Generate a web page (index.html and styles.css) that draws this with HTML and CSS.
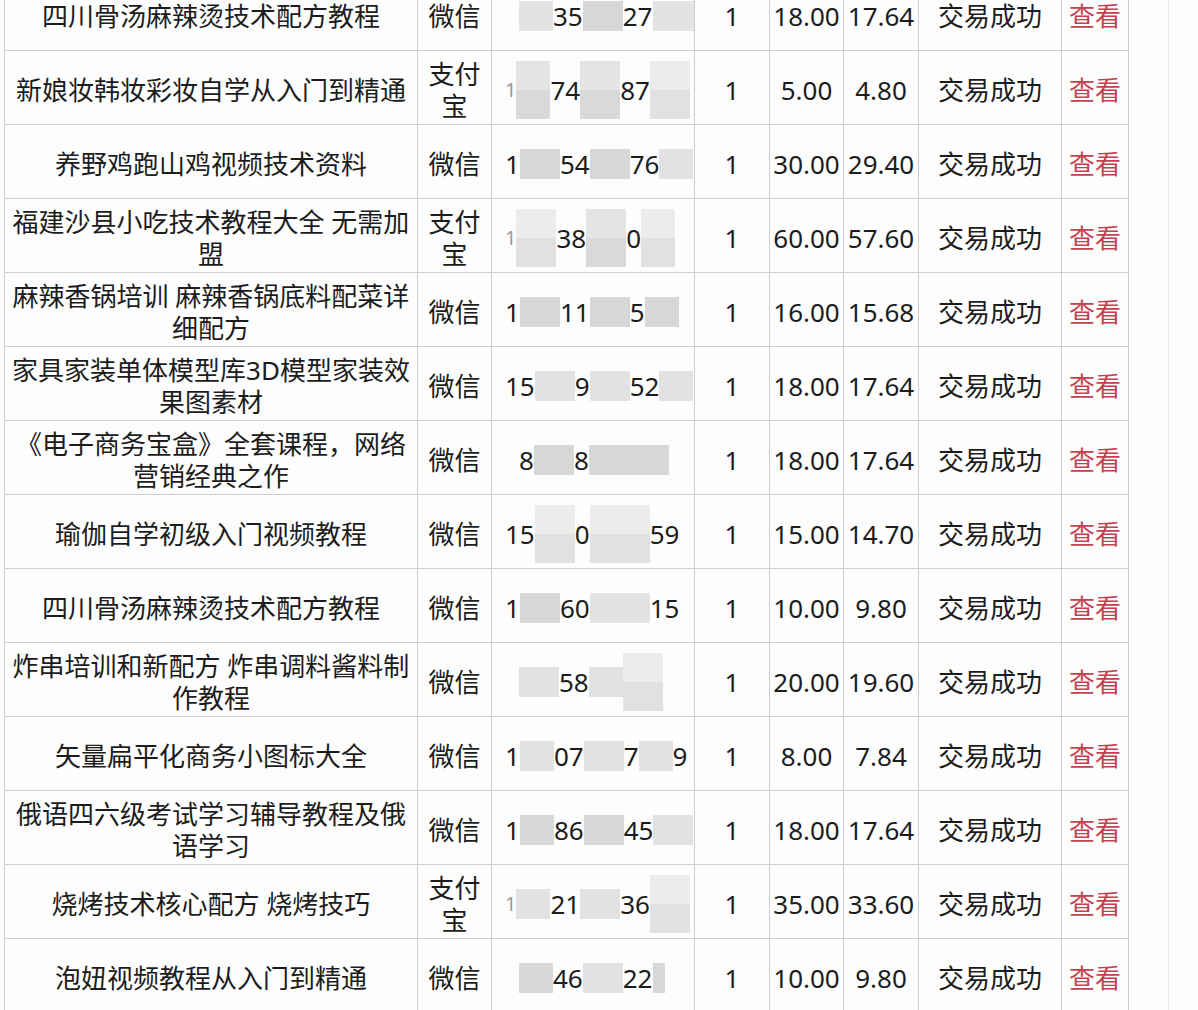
FILE: index.html
```html
<!DOCTYPE html>
<html lang="zh-CN">
<head>
<meta charset="utf-8">
<title>订单列表</title>
<link rel="stylesheet" href="styles.css">
</head>
<body>
<div class="page">
<table class="orders">
<colgroup>
<col class="c-name"><col class="c-pay"><col class="c-phone"><col class="c-qty"><col class="c-price"><col class="c-net"><col class="c-status"><col class="c-op">
</colgroup>
<tbody>
<tr><td class="name">四川骨汤麻辣烫技术配方教程</td><td>微信</td><td class="ph"><div class="phone"><span class="sp"></span><span class="g w2 light"></span><span class="d">35</span><span class="g w3"></span><span class="d">27</span><span class="g w4 light"></span></div></td><td>1</td><td class="num">18.00</td><td class="num">17.64</td><td>交易成功</td><td><a class="view">查看</a></td></tr>
<tr><td class="name">新娘妆韩妆彩妆自学从入门到精通</td><td>支付宝</td><td class="ph"><div class="phone"><span class="d faint">1</span><span class="g w2 t"></span><span class="d">74</span><span class="g w3 t"></span><span class="d">87</span><span class="g w3 t light"></span></div></td><td>1</td><td class="num">5.00</td><td class="num">4.80</td><td>交易成功</td><td><a class="view">查看</a></td></tr>
<tr><td class="name">养野鸡跑山鸡视频技术资料</td><td>微信</td><td class="ph"><div class="phone"><span class="d">1</span><span class="g w3"></span><span class="d">54</span><span class="g w3"></span><span class="d">76</span><span class="g w2 light"></span></div></td><td>1</td><td class="num">30.00</td><td class="num">29.40</td><td>交易成功</td><td><a class="view">查看</a></td></tr>
<tr><td class="name">福建沙县小吃技术教程大全 无需加盟</td><td>支付宝</td><td class="ph"><div class="phone"><span class="d faint">1</span><span class="g w3 t light"></span><span class="d">38</span><span class="g w3 t"></span><span class="d">0</span><span class="g w2 t light"></span></div></td><td>1</td><td class="num">60.00</td><td class="num">57.60</td><td>交易成功</td><td><a class="view">查看</a></td></tr>
<tr><td class="name">麻辣香锅培训 麻辣香锅底料配菜详细配方</td><td>微信</td><td class="ph"><div class="phone"><span class="d">1</span><span class="g w3"></span><span class="d">11</span><span class="g w3"></span><span class="d">5</span><span class="g w2"></span></div></td><td>1</td><td class="num">16.00</td><td class="num">15.68</td><td>交易成功</td><td><a class="view">查看</a></td></tr>
<tr><td class="name">家具家装单体模型库3D模型家装效果图素材</td><td>微信</td><td class="ph"><div class="phone"><span class="d">15</span><span class="g w3 light"></span><span class="d">9</span><span class="g w3 light"></span><span class="d">52</span><span class="g w2 light"></span></div></td><td>1</td><td class="num">18.00</td><td class="num">17.64</td><td>交易成功</td><td><a class="view">查看</a></td></tr>
<tr><td class="name">《电子商务宝盒》全套课程，网络营销经典之作</td><td>微信</td><td class="ph"><div class="phone"><span class="sp"></span><span class="d">8</span><span class="g w3"></span><span class="d">8</span><span class="g w5"></span></div></td><td>1</td><td class="num">18.00</td><td class="num">17.64</td><td>交易成功</td><td><a class="view">查看</a></td></tr>
<tr><td class="name">瑜伽自学初级入门视频教程</td><td>微信</td><td class="ph"><div class="phone"><span class="d">15</span><span class="g w3 t light"></span><span class="d">0</span><span class="g w4 t light"></span><span class="d">59</span></div></td><td>1</td><td class="num">15.00</td><td class="num">14.70</td><td>交易成功</td><td><a class="view">查看</a></td></tr>
<tr><td class="name">四川骨汤麻辣烫技术配方教程</td><td>微信</td><td class="ph"><div class="phone"><span class="d">1</span><span class="g w3"></span><span class="d">60</span><span class="g w4 light"></span><span class="d">15</span></div></td><td>1</td><td class="num">10.00</td><td class="num">9.80</td><td>交易成功</td><td><a class="view">查看</a></td></tr>
<tr><td class="name">炸串培训和新配方 炸串调料酱料制作教程</td><td>微信</td><td class="ph"><div class="phone"><span class="sp"></span><span class="g w3 light"></span><span class="d">58</span><span class="g w2 light"></span><span class="g w3 t light"></span></div></td><td>1</td><td class="num">20.00</td><td class="num">19.60</td><td>交易成功</td><td><a class="view">查看</a></td></tr>
<tr><td class="name">矢量扁平化商务小图标大全</td><td>微信</td><td class="ph"><div class="phone"><span class="d">1</span><span class="g w2 light"></span><span class="d">07</span><span class="g w3 light"></span><span class="d">7</span><span class="g w2 light"></span><span class="d">9</span></div></td><td>1</td><td class="num">8.00</td><td class="num">7.84</td><td>交易成功</td><td><a class="view">查看</a></td></tr>
<tr><td class="name">俄语四六级考试学习辅导教程及俄语学习</td><td>微信</td><td class="ph"><div class="phone"><span class="d">1</span><span class="g w2"></span><span class="d">86</span><span class="g w3"></span><span class="d">45</span><span class="g w3 light"></span></div></td><td>1</td><td class="num">18.00</td><td class="num">17.64</td><td>交易成功</td><td><a class="view">查看</a></td></tr>
<tr><td class="name">烧烤技术核心配方 烧烤技巧</td><td>支付宝</td><td class="ph"><div class="phone"><span class="d faint">1</span><span class="g w2 light"></span><span class="d">21</span><span class="g w3 light"></span><span class="d">36</span><span class="g w3 t light"></span></div></td><td>1</td><td class="num">35.00</td><td class="num">33.60</td><td>交易成功</td><td><a class="view">查看</a></td></tr>
<tr><td class="name">泡妞视频教程从入门到精通</td><td>微信</td><td class="ph"><div class="phone"><span class="sp"></span><span class="g w2"></span><span class="d">46</span><span class="g w3 light"></span><span class="d">22</span><span class="g w1"></span></div></td><td>1</td><td class="num">10.00</td><td class="num">9.80</td><td>交易成功</td><td><a class="view">查看</a></td></tr>
</tbody>
</table>
<div class="edge"></div>
</div>
</body>
</html>
```

FILE: styles.css
```css
html, body {
  margin: 0;
  padding: 0;
  background: #fdfdfd;
}

body {
  font-family: "Noto Sans", "Noto Sans CJK SC", sans-serif;
  color: #1c1c1c;
}

.page {
  display: flex;
  height: 1010px;
  overflow: hidden;
  padding-left: 4px;
}

.orders {
  border-collapse: collapse;
  table-layout: fixed;
  width: 1125px;
  margin-top: -24px;
  align-self: flex-start;
  font-size: 26px;
  flex: none;
}

.c-name { width: 413px; }
.c-pay { width: 74px; }
.c-phone { width: 203px; }
.c-qty { width: 75px; }
.c-price { width: 74px; }
.c-net { width: 75px; }
.c-status { width: 143px; }
.c-op { width: 67px; }

.orders td {
  border: 1px solid #cdcdcd;
  text-align: center;
  vertical-align: middle;
  padding: 4px 4px 0;
  line-height: 32px;
  height: 74px;
  box-sizing: border-box;
  overflow: hidden;
}

.orders td.num {
  padding: 4px 1px 0;
  white-space: nowrap;
}

.orders td.ph {
  padding: 4px 0 0 13px;
  text-align: left;
}

.phone {
  display: flex;
  align-items: center;
  height: 60px;
}

.d {
  flex: none;
  white-space: nowrap;
}

.d.faint {
  color: #9a9a9a;
  font-size: 20px;
}

.sp {
  flex: none;
  width: 14px;
}

.g {
  flex: none;
  height: 30px;
  background: #d7d7d7;
}

.g.light {
  background: #e2e2e2;
}

.g.t {
  height: 58px;
  background: linear-gradient(#e4e4e4 0 50%, #d9d9d9 50% 100%);
}

.g.t.light {
  background: linear-gradient(#ececec 0 50%, #e1e1e1 50% 100%);
}

.w1 { width: 12px; }
.w2 { width: 34px; }
.w3 { width: 40px; }
.w4 { width: 60px; }
.w5 { width: 80px; }

.view {
  color: #c4424f;
  text-decoration: none;
}

.edge {
  flex: none;
  width: 1px;
  margin-left: 39px;
  background: #e8e8e8;
}
```
